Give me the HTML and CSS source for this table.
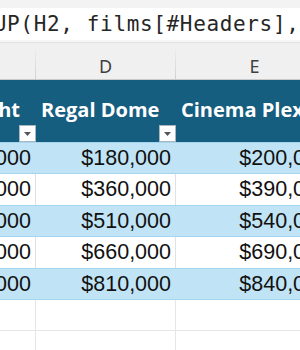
FILE: index.html
```html
<!DOCTYPE html>
<html>
<head>
<meta charset="utf-8">
<link rel="stylesheet" href="styles.css">
</head>
<body>
<div class="sheet">
  <div class="topstrip"></div>
  <div class="formula"><span class="ftext">=XLOOKUP(H2, films[#Headers], films[#Data])</span></div>
  <div class="gap"></div>
  <div class="grid colhead">
    <div class="ch"></div>
    <div class="ch">D</div>
    <div class="ch">E</div>
  </div>
  <div class="grid thead">
    <div class="th"><span class="tt cut">Starlight</span><span class="fb"><svg width="7" height="4" viewBox="0 0 7 4"><path d="M0 0H7L3.5 4Z" fill="#555"/></svg></span></div>
    <div class="th"><span class="tt">Regal Dome</span><span class="fb"><svg width="7" height="4" viewBox="0 0 7 4"><path d="M0 0H7L3.5 4Z" fill="#555"/></svg></span></div>
    <div class="th"><span class="tt">Cinema Plex</span><span class="fb"><svg width="7" height="4" viewBox="0 0 7 4"><path d="M0 0H7L3.5 4Z" fill="#555"/></svg></span></div>
  </div>
  <div class="grid row band"><div class="td"><span>$170,000</span></div><div class="td"><span>$180,000</span></div><div class="td"><span>$200,000</span></div></div>
  <div class="grid row plain"><div class="td"><span>$340,000</span></div><div class="td"><span>$360,000</span></div><div class="td"><span>$390,000</span></div></div>
  <div class="grid row band"><div class="td"><span>$490,000</span></div><div class="td"><span>$510,000</span></div><div class="td"><span>$540,000</span></div></div>
  <div class="grid row plain"><div class="td"><span>$640,000</span></div><div class="td"><span>$660,000</span></div><div class="td"><span>$690,000</span></div></div>
  <div class="grid row band"><div class="td"><span>$790,000</span></div><div class="td"><span>$810,000</span></div><div class="td"><span>$840,000</span></div></div>
  <div class="grid row empty"><div class="td"></div><div class="td"></div><div class="td"></div></div>
  <div class="grid row empty"><div class="td"></div><div class="td"></div><div class="td"></div></div>
</div>
</body>
</html>
```
FILE: styles.css
```css
html, body {
  margin: 0;
  padding: 0;
  background: #ffffff;
}
.sheet {
  width: 300px;
  height: 350px;
  overflow: hidden;
}
.topstrip {
  height: 8px;
  background: #f3f3f3;
}
.formula {
  height: 32px;
  background: #ffffff;
  overflow: hidden;
  white-space: nowrap;
  display: flex;
  align-items: center;
}
.ftext {
  font-family: "DejaVu Sans Mono", monospace;
  font-size: 21px;
  letter-spacing: 0.65px;
  color: #262626;
  margin-left: -86px;
}
.gap {
  height: 2px;
  background: #f6f6f6;
  border-bottom: 1px solid #e2e2e2;
}
.grid {
  display: grid;
  grid-template-columns: 36px 140px 158px;
  width: 334px;
}
.colhead {
  height: 36px;
  background: #f0f0f0;
  border-bottom: 1px solid #c9c9c9;
}
.ch {
  display: flex;
  align-items: center;
  justify-content: center;
  font-family: "Noto Sans", sans-serif;
  font-size: 18px;
  color: #404040;
  border-right: 1px solid transparent;
  border-image: linear-gradient(to bottom, #f0f0f0 10%, #cfcfcf) 1;
  padding-top: 9px;
}
.thead {
  height: 62px;
  background: #165e80;
}
.th {
  display: flex;
  flex-direction: column;
  justify-content: space-between;
  align-items: flex-start;
  padding: 18px 0 0 5px;
  overflow: hidden;
}
.tt {
  font-family: "Open Sans", sans-serif;
  font-weight: 700;
  font-size: 20px;
  line-height: 24px;
  color: #ffffff;
  white-space: nowrap;
}
.tt.cut {
  align-self: flex-end;
  margin-right: 16px;
}
.fb {
  align-self: flex-end;
  width: 17px;
  height: 17px;
  background: #ffffff;
  border: 1px solid #a9b6bd;
  box-sizing: border-box;
  display: flex;
  align-items: center;
  justify-content: center;
}
.row {
  height: 32px;
  box-sizing: border-box;
}
.row.plain,
.row.empty {
  height: 31px;
}
.row .td {
  display: flex;
  justify-content: flex-end;
  align-items: center;
  font-family: "Liberation Sans", Arial, sans-serif;
  font-size: 21.5px;
  color: #111111;
  padding-right: 4px;
  border-right: 1px solid #e1e1e1;
  white-space: nowrap;
  overflow: hidden;
}
.row.band {
  background: #c0e4f5;
  border-top: 1px solid #a6d6ef;
  border-bottom: 1px solid #a6d6ef;
}
.row.band .td {
  border-right-color: transparent;
}
.row.empty {
  border-bottom: 1px solid #e6e6e6;
}
.row.empty .td {
  border-right-color: #e6e6e6;
}
```
